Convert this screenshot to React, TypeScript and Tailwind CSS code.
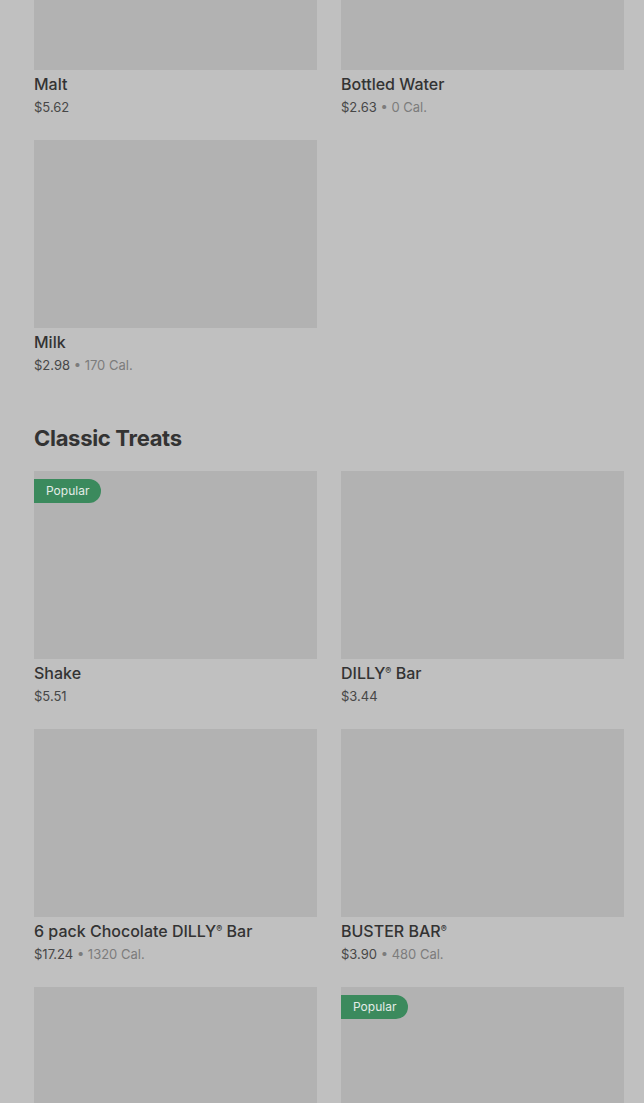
import React from 'react';

type Item = {
    name: React.ReactNode;
    price: string;
    cal?: string;
    popular?: boolean;
};

const R = () => <sup className="text-[9px] -top-[0.6em]">®</sup>;

function ItemCard({ item }: { item: Item }) {
    return (
        <div className="flex flex-col">
            <div className="relative h-[188px] bg-[#b2b2b2]">
                {item.popular && (
                    <span className="absolute left-0 top-[8px] h-[24px] pl-[12px] pr-[12px] flex items-center rounded-r-full bg-[#3b8a5d] text-[12px] text-[#e4ece7]">
                        Popular
                    </span>
                )}
            </div>
            {item.name && (
                <>
                    <p className="mt-[4px] text-[16px] leading-[20px] font-medium text-[#333333]">{item.name}</p>
                    <p className="mt-[4px] text-[13px] leading-[18px] text-[#474747]">
                        {item.price}
                        {item.cal && <span className="text-[#7c7c7c]"> • {item.cal}</span>}
                    </p>
                </>
            )}
        </div>
    );
}

function Grid({ items }: { items: (Item | null)[] }) {
    return (
        <div className="grid grid-cols-2 gap-x-[24px] gap-y-[24px]">
            {items.map((item, i) => (item ? <ItemCard key={i} item={item} /> : <div key={i} />))}
        </div>
    );
}

export default function App() {
    const drinks: (Item | null)[] = [
        { name: 'Malt', price: '$5.62' },
        { name: 'Bottled Water', price: '$2.63', cal: '0 Cal.' },
        { name: 'Milk', price: '$2.98', cal: '170 Cal.' },
        null,
    ];

    const treats: (Item | null)[] = [
        { name: 'Shake', price: '$5.51', popular: true },
        { name: <>DILLY<R /> Bar</>, price: '$3.44' },
        { name: <>6 pack Chocolate DILLY<R /> Bar</>, price: '$17.24', cal: '1320 Cal.' },
        { name: <>BUSTER BAR<R /></>, price: '$3.90', cal: '480 Cal.' },
        { name: '', price: '' },
        { name: '', price: '', popular: true },
    ];

    return (
        <div className="h-[1103px] overflow-hidden bg-[#c0c0c0]" style={{ fontFamily: 'Inter, "Noto Sans", sans-serif' }}>
            <div className="-mt-[118px] pl-[34px] pr-[20px]">
                <Grid items={drinks} />
                <h2 className="mt-[50px] text-[22px] leading-[28px] font-bold tracking-[-0.3px] text-[#333333]">Classic Treats</h2>
                <div className="mt-[19px]">
                    <Grid items={treats} />
                </div>
            </div>
        </div>
    );
}
